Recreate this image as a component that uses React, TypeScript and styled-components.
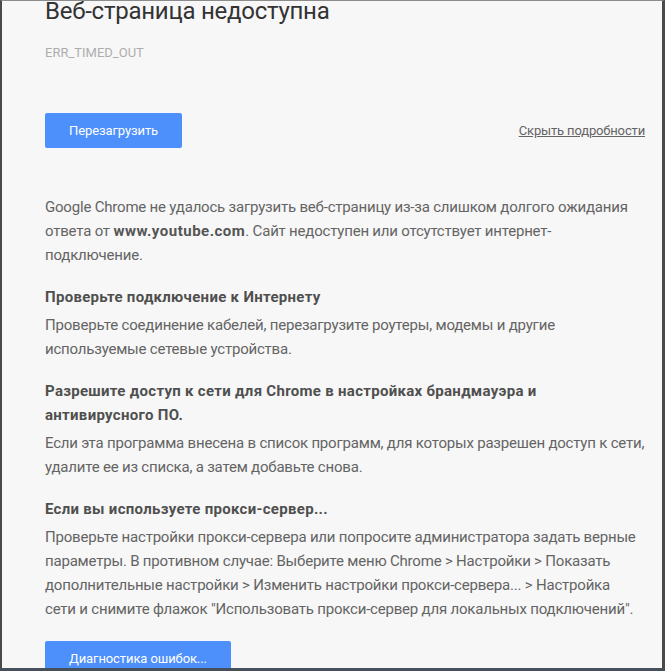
import React from "react";
import styled, { createGlobalStyle } from "styled-components";

const Global = createGlobalStyle`
  html, body { margin: 0; padding: 0; background: #f7f7f7; }
  body { font-family: Roboto, "Open Sans", sans-serif; }
`;

const Frame = styled.div`
  box-sizing: border-box;
  width: 665px;
  height: 671px;
  overflow: hidden;
  background: #f7f7f7;
  border-left: 2px solid #4a4a4a;
  border-right: 3px solid #4a4a4a;
  border-top: 1px solid #8c8c8c;
  border-bottom: 3px solid #46505a;
  padding-left: 43px;
`;

const Wrapper = styled.div`
  width: 600px;
  color: #646464;
  font-size: 15px;
  line-height: 24px;
  letter-spacing: -0.2px;
`;

const Title = styled.h1`
  margin: 0;
  color: #333;
  font-size: 24px;
  font-weight: normal;
  line-height: 20px;
  letter-spacing: -0.25px;
`;

const ErrorCode = styled.div`
  margin-top: 21px;
  font-size: 13px;
  line-height: 21px;
  color: #646464;
  opacity: 0.5;
  text-transform: uppercase;
  letter-spacing: 0;
`;

const NavRow = styled.div`
  display: flex;
  align-items: center;
  justify-content: space-between;
  margin-top: 50px;
`;

const BlueButton = styled.button`
  box-sizing: border-box;
  height: 35px;
  padding: 0 24px;
  border: none;
  border-radius: 2px;
  background: #4d8ffb;
  color: #fff;
  font-family: inherit;
  font-size: 13px;
  letter-spacing: -0.1px;
  cursor: pointer;
`;

const DetailsLink = styled.a`
  color: #646464;
  font-size: 13px;
  letter-spacing: -0.15px;
  text-decoration: underline;
  cursor: pointer;
`;

const Paragraph = styled.p<{ $top?: number }>`
  margin: ${(p) => p.$top ?? 0}px 0 0;
`;

const Host = styled.b`
  color: #555;
  letter-spacing: 0.5px;
`;

const Section = styled.div`
  margin-top: 18px;
`;

const SectionTitle = styled.div`
  font-weight: bold;
  color: #4f4f4f;
  letter-spacing: 0.3px;
`;

const SectionText = styled.div`
  margin-top: 4px;
`;

const BottomButton = styled(BlueButton)`
  margin-top: 20px;
`;

export default function App() {
  return (
    <>
      <Global />
      <Frame>
        <Wrapper>
          <Title>Веб-страница недоступна</Title>
          <ErrorCode>ERR_TIMED_OUT</ErrorCode>
          <NavRow>
            <BlueButton>Перезагрузить</BlueButton>
            <DetailsLink>Скрыть подробности</DetailsLink>
          </NavRow>
          <Paragraph $top={47}>
            Google Chrome не удалось загрузить веб-страницу из-за слишком долгого ожидания ответа от{" "}
            <Host>www.youtube.com</Host>. Сайт недоступен или отсутствует интернет-
            <br />
            подключение.
          </Paragraph>
          <Section>
            <SectionTitle>Проверьте подключение к Интернету</SectionTitle>
            <SectionText>
              Проверьте соединение кабелей, перезагрузите роутеры, модемы и другие используемые сетевые устройства.
            </SectionText>
          </Section>
          <Section>
            <SectionTitle>Разрешите доступ к сети для Chrome в настройках брандмауэра и антивирусного ПО.</SectionTitle>
            <SectionText>
              Если эта программа внесена в список программ, для которых разрешен доступ к сети, удалите ее из списка, а затем добавьте снова.
            </SectionText>
          </Section>
          <Section>
            <SectionTitle>Если вы используете прокси-сервер...</SectionTitle>
            <SectionText>
              Проверьте настройки прокси-сервера или попросите администратора задать верные параметры. В противном случае: Выберите меню Chrome &gt; Настройки &gt; Показать дополнительные настройки &gt; Изменить настройки прокси-сервера... &gt; Настройка сети&nbsp;и снимите флажок "Использовать прокси-сервер для локальных подключений".
            </SectionText>
          </Section>
          <BottomButton>Диагностика ошибок...</BottomButton>
        </Wrapper>
      </Frame>
    </>
  );
}
